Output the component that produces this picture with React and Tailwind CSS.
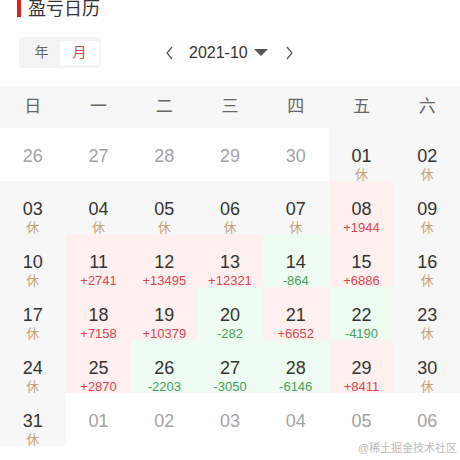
import React from "react";

const weekdays = ["日", "一", "二", "三", "四", "五", "六"];

// t: out = other month, rest = holiday, up = gain, down = loss
const days = [
   ["26", "out"], ["27", "out"], ["28", "out"], ["29", "out"], ["30", "out"], ["01", "rest"], ["02", "rest"],
   ["03", "rest"], ["04", "rest"], ["05", "rest"], ["06", "rest"], ["07", "rest"], ["08", "up", "+1944"], ["09", "rest"],
   ["10", "rest"], ["11", "up", "+2741"], ["12", "up", "+13495"], ["13", "up", "+12321"], ["14", "down", "-864"], ["15", "up", "+6886"], ["16", "rest"],
   ["17", "rest"], ["18", "up", "+7158"], ["19", "up", "+10379"], ["20", "down", "-282"], ["21", "up", "+6652"], ["22", "down", "-4190"], ["23", "rest"],
   ["24", "rest"], ["25", "up", "+2870"], ["26", "down", "-2203"], ["27", "down", "-3050"], ["28", "down", "-6146"], ["29", "up", "+8411"], ["30", "rest"],
   ["31", "rest"], ["01", "out"], ["02", "out"], ["03", "out"], ["04", "out"], ["05", "out"], ["06", "out"],
];

const cellBg = {
   out: "bg-white",
   rest: "bg-[#f7f7f7]",
   up: "bg-[#fff0f0]",
   down: "bg-[#eefcf1]",
};

function DayCell({ day, type, amount }) {
   return (
      <div className={`h-[53px] flex flex-col items-center pt-[18px] ${cellBg[type]}`}>
         <span
            className={`text-[18px] leading-[20px] ${type === "out" ? "text-[#a3a3a3]" : "text-[#333]"}`}
         >
            {day}
         </span>
         {type === "rest" && (
            <span className="text-[13px] leading-[17px] text-[#c4a276]">休</span>
         )}
         {type === "up" && (
            <span className="text-[13px] leading-[17px] text-[#d9454f]">{amount}</span>
         )}
         {type === "down" && (
            <span className="text-[13px] leading-[17px] text-[#4a9e5c]">{amount}</span>
         )}
      </div>
   );
}

export default function App() {
   return (
      <div
         className="relative w-[460px] h-[460px] bg-white overflow-hidden"
         style={{ fontFamily: '"Liberation Sans", "Noto Sans CJK SC", sans-serif' }}
      >
         <div className="flex items-start h-[18px]">
            <div className="ml-[17px] w-[4px] h-[17px] bg-[#e02020]" />
            <h1 className="ml-[7px] text-[18px] leading-[18px] text-[#333]">盈亏日历</h1>
         </div>

         <div className="flex items-center mt-[19px] h-[31px]">
            <div className="ml-[19px] w-[82px] h-[31px] rounded-[4px] bg-[#f3f3f3] flex items-center pl-[4px] pr-[2px]">
               <div className="w-[37px] text-center text-[14px] text-[#666]">年</div>
               <div className="w-[39px] h-[24px] rounded-[3px] bg-white flex items-center justify-center text-[14px] text-[#d9454f]">
                  月
               </div>
            </div>
            <div className="ml-[64px] flex items-center">
               <svg width="10" height="14" viewBox="0 0 10 14" className="text-[#555]">
                  <path d="M7 1 L2 7 L7 13" fill="none" stroke="currentColor" strokeWidth="1.2" />
               </svg>
               <span className="ml-[14px] text-[16px] text-[#333]">2021-10</span>
               <svg width="14" height="9" viewBox="0 0 14 9" className="ml-[6px]">
                  <path d="M0 1 L14 1 L7 8 Z" fill="#555" />
               </svg>
               <svg width="10" height="14" viewBox="0 0 10 14" className="ml-[16px] text-[#555]">
                  <path d="M3 1 L8 7 L3 13" fill="none" stroke="currentColor" strokeWidth="1.2" />
               </svg>
            </div>
         </div>

         <div className="mt-[18px] grid grid-cols-7 h-[42px] bg-[#f7f7f7]">
            {weekdays.map((w) => (
               <div key={w} className="flex items-center justify-center text-[17px] text-[#666]">
                  {w}
               </div>
            ))}
         </div>

         <div className="grid grid-cols-7">
            {days.map(([day, type, amount], i) => (
               <DayCell key={i} day={day} type={type} amount={amount} />
            ))}
         </div>

         <div className="absolute right-[3px] bottom-[4px] text-[11px] text-[#bbb]">@稀土掘金技术社区</div>
      </div>
   );
}
